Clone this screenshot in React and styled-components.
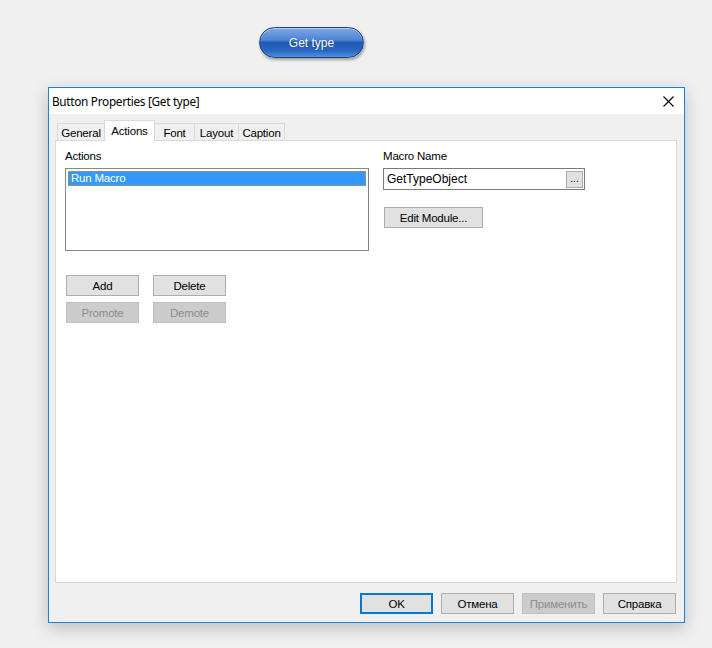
import React from 'react';
import styled, { createGlobalStyle } from 'styled-components';

const GlobalStyle = createGlobalStyle`
  html, body {
    margin: 0;
    padding: 0;
    background: #f0f0f0;
  }
  body {
    font-family: "Liberation Sans", Arial, sans-serif;
    font-size: 12px;
    color: #000;
  }
`;

const Page = styled.div`
  width: 712px;
  height: 648px;
  padding-top: 27px;
  box-sizing: border-box;
`;

const GlossyButton = styled.div`
  width: 105px;
  height: 31px;
  margin-left: 259px;
  box-sizing: border-box;
  border-radius: 16px;
  border: 1px solid #1c3f86;
  background: linear-gradient(#7eaae6 0%, #4b83d4 42%, #2358b4 50%, #2a66c2 78%, #4f92dd 100%);
  box-shadow: 1px 2px 3px rgba(0, 0, 0, 0.35), inset 0 1px 0 rgba(255, 255, 255, 0.45);
  display: flex;
  align-items: center;
  justify-content: center;
  color: #fff;
  font-size: 12px;
  text-shadow: 0 0 1px rgba(0, 0, 0, 0.3);
`;

const Dialog = styled.div`
  width: 637px;
  height: 536px;
  margin: 29px 0 0 48px;
  box-sizing: border-box;
  border: 1px solid #1883d7;
  background: #f0f0f0;
  box-shadow: 0 5px 16px rgba(0, 0, 0, 0.22);
  display: flex;
  flex-direction: column;
`;

const TitleBar = styled.div`
  height: 26px;
  background: #fff;
  display: flex;
  align-items: center;
  justify-content: space-between;
  padding: 0 10px 0 3px;
  font-family: "Noto Sans", "Open Sans", sans-serif;
  font-size: 11.8px;
  letter-spacing: -0.3px;
  color: #000;
`;

const Body = styled.div`
  flex: 1;
  display: flex;
  flex-direction: column;
  padding: 7px 7px 8px 6px;
`;

const TabStrip = styled.div`
  display: flex;
  align-items: flex-end;
  height: 20px;
  padding-left: 3px;
  position: relative;
  z-index: 1;
`;

const Tab = styled.div`
  width: ${p => p.$w}px;
  height: ${p => (p.$active ? 21 : 18)}px;
  box-sizing: border-box;
  border: 1px solid #d9d9d9;
  border-bottom: ${p => (p.$active ? 'none' : '1px solid #d9d9d9')};
  margin-left: -1px;
  background: ${p => (p.$active ? '#fff' : '#f0f0f0')};
  display: flex;
  align-items: center;
  justify-content: center;
  padding-top: ${p => (p.$active ? 0 : 1)}px;
  font-size: 11.5px;
  letter-spacing: -0.2px;
`;

const Panel = styled.div`
  height: 443px;
  box-sizing: border-box;
  margin-top: -1px;
  border: 1px solid #d9d9d9;
  background: #fff;
  padding: 8px 9px;
  display: grid;
  grid-template-columns: 304px 202px;
  column-gap: 14px;
  align-content: start;
`;

const Column = styled.div`
  display: flex;
  flex-direction: column;
`;

const Label = styled.div`
  font-size: 11.5px;
  letter-spacing: -0.2px;
  height: 18px;
  padding-top: 1px;
`;

const ListBox = styled.div`
  height: 83px;
  box-sizing: border-box;
  border: 1px solid #828790;
  padding: 2px;
`;

const ListItem = styled.div`
  height: 15px;
  line-height: 13px;
  box-sizing: border-box;
  background: #3399ff;
  border: 1px dotted #d68a2a;
  color: #fff;
  padding-left: 2px;
  font-size: 11.5px;
  letter-spacing: -0.2px;
`;

const TextBox = styled.div`
  height: 22px;
  box-sizing: border-box;
  border: 1px solid #7a7a7a;
  display: flex;
  align-items: center;
  justify-content: space-between;
  padding: 0 1px 0 3px;
  font-size: 12px;
`;

const DotsButton = styled.div`
  width: 17px;
  height: 17px;
  box-sizing: border-box;
  border: 1px solid #adadad;
  background: #e1e1e1;
  font-size: 10px;
  line-height: 14px;
  text-align: center;
`;

const Button = styled.div`
  width: ${p => p.$w || 73}px;
  height: 21px;
  box-sizing: border-box;
  border: ${p => (p.$default ? '2px' : '1px')} solid;
  background: ${p => (p.$disabled ? '#cccccc' : '#e1e1e1')};
  border-color: ${p => (p.$disabled ? '#bfbfbf' : p.$default ? '#0078d7' : '#adadad')};
  color: ${p => (p.$disabled ? '#8d8d8d' : '#000')};
  display: flex;
  align-items: center;
  justify-content: center;
  font-size: 11.5px;
  letter-spacing: -0.2px;
`;

const ButtonGrid = styled.div`
  display: grid;
  grid-template-columns: 73px 73px;
  column-gap: 14px;
  row-gap: 6px;
  margin: 24px 0 0 1px;
`;

const EditRow = styled.div`
  margin: 17px 0 0 1px;
`;

const Footer = styled.div`
  display: flex;
  justify-content: flex-end;
  gap: 8px;
  margin-top: 10px;
  padding-right: 1px;
`;

const CloseIcon = () => (
  <svg width="11" height="11" viewBox="0 0 11 11">
    <path d="M0.5 0.5 L10.5 10.5 M10.5 0.5 L0.5 10.5" stroke="#000" strokeWidth="1.1" />
  </svg>
);

const tabs = [
  { name: 'General', w: 48 },
  { name: 'Actions', w: 51, active: true },
  { name: 'Font', w: 41 },
  { name: 'Layout', w: 45 },
  { name: 'Caption', w: 47 },
];

export default function App() {
  return (
    <Page>
      <GlobalStyle />
      <GlossyButton>Get type</GlossyButton>
      <Dialog>
        <TitleBar>
          <span>Button Properties [Get type]</span>
          <CloseIcon />
        </TitleBar>
        <Body>
          <TabStrip>
            {tabs.map(t => (
              <Tab key={t.name} $w={t.w} $active={t.active}>{t.name}</Tab>
            ))}
          </TabStrip>
          <Panel>
            <Column>
              <Label>Actions</Label>
              <ListBox>
                <ListItem>Run Macro</ListItem>
              </ListBox>
              <ButtonGrid>
                <Button>Add</Button>
                <Button>Delete</Button>
                <Button $disabled>Promote</Button>
                <Button $disabled>Demote</Button>
              </ButtonGrid>
            </Column>
            <Column>
              <Label>Macro Name</Label>
              <TextBox>
                <span>GetTypeObject</span>
                <DotsButton>...</DotsButton>
              </TextBox>
              <EditRow>
                <Button $w={99}>Edit Module...</Button>
              </EditRow>
            </Column>
          </Panel>
          <Footer>
            <Button $default>OK</Button>
            <Button>Отмена</Button>
            <Button $disabled>Применить</Button>
            <Button>Справка</Button>
          </Footer>
        </Body>
      </Dialog>
    </Page>
  );
}
